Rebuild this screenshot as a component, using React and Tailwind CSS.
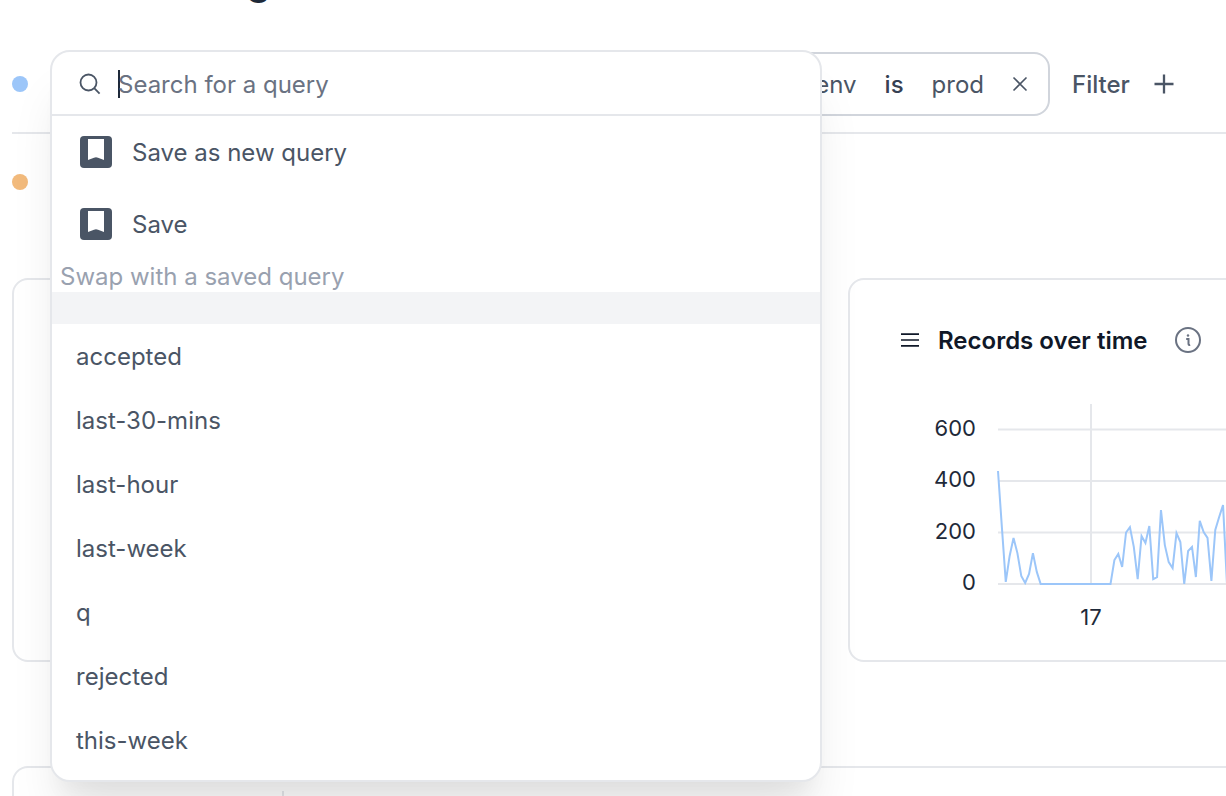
import React, { useState } from "react";

const savedQueries = ["accepted", "last-30-mins", "last-hour", "last-week", "q", "rejected", "this-week"];

const records = [
    439, 221, 8, 109, 179, 120, 31, 4, 39, 120, 47,
    0, 0, 0, 0, 0, 0, 0, 0, 0, 0, 0, 0, 0, 0, 0, 0, 0, 0, 0,
    93, 117, 66, 200, 221, 144, 19, 186, 159, 225, 19, 27, 287, 151, 85, 62, 198, 163, 0, 128,
    144, 27, 245, 202, 179, 12, 210, 260, 307, 4,
];

const toY = (value) => 192 - value * 0.2575;

function SearchIcon() {
    return (
        <svg className="size-6 shrink-0" viewBox="0 0 24 24" fill="none" stroke="currentColor" strokeWidth="1.8">
            <circle cx="10.5" cy="10.5" r="8" />
            <path d="M16.2 16.2L21.6 21.6" />
        </svg>
    );
}

function BookmarkIcon() {
    return (
        <svg className="size-8 shrink-0" viewBox="0 0 32 32">
            <rect width="32" height="32" rx="4" fill="currentColor" />
            <path d="M8 3h16v21l-6-2.3q-2-.9-4 0L8 24z" fill="#fff" />
        </svg>
    );
}

function QueryMenu() {
    const [search, setSearch] = useState("");
    const visible = savedQueries.filter((name) => name.includes(search));

    return (
        <div className="absolute -top-0.5 left-0 z-10 w-[772px] rounded-[20px] border-2 border-gray-200 bg-white pb-2 text-gray-600 shadow-[0_40px_50px_-10px_rgba(0,0,0,0.1),0_20px_20px_-10px_rgba(0,0,0,0.04)]">
            <div className="flex h-16 items-center gap-4 border-b-2 border-gray-200 px-[26px] pt-0.5">
                <SearchIcon />
                <span className="-mr-4 h-7 w-0.5 bg-gray-800" />
                <input
                    type="text"
                    aria-label="Search for a query"
                    placeholder="Search for a query"
                    value={search}
                    onChange={(e) => setSearch(e.target.value)}
                    className="-ml-0.5 min-w-0 flex-1 bg-transparent pt-0.5 outline-none placeholder:text-gray-500"
                />
            </div>
            <button type="button" className="flex h-[72px] w-full items-center gap-5 px-7">
                <BookmarkIcon />
                <span className="pt-0.5">Save as new query</span>
            </button>
            <button type="button" className="flex h-[72px] w-full items-center gap-5 px-7">
                <BookmarkIcon />
                <span className="pt-0.5">Save</span>
            </button>
            <p className="h-8 px-2 leading-[34px] text-gray-400">Swap with a saved query</p>
            <div className="h-8 bg-gray-100" />
            <ul>
                {visible.map((name) => (
                    <li key={name}>
                        <button type="button" className="flex h-16 w-full items-center px-6 pt-0.5">
                            {name}
                        </button>
                    </li>
                ))}
            </ul>
        </div>
    );
}

function FilterBar() {
    return (
        <div className="ml-3 flex items-center border-b-2 border-gray-200 py-4 text-gray-600">
            <span className="size-4 shrink-0 rounded-full bg-[#9cc6f9]" />
            <div className="relative ml-[22px] h-16 w-[732px] shrink-0">
                <QueryMenu />
            </div>
            <div className="flex h-16 w-[268px] shrink-0 items-center justify-end gap-7 rounded-2xl border-2 border-gray-300 pr-5">
                <span className="pt-0.5">env</span>
                <span className="pt-0.5 font-medium text-gray-700">is</span>
                <span className="pt-0.5">prod</span>
                <button type="button" aria-label="Remove filter">
                    <svg className="size-4" viewBox="0 0 16 16" fill="none" stroke="currentColor" strokeWidth="1.6">
                        <path d="M1.5 1.5l13 13M14.5 1.5l-13 13" />
                    </svg>
                </button>
            </div>
            <button type="button" className="ml-[22px] flex items-center gap-6 font-medium">
                <span className="pt-0.5">Filter</span>
                <svg className="size-5" viewBox="0 0 20 20" fill="none" stroke="currentColor" strokeWidth="2.3">
                    <path d="M10 0.5v19M0.5 10h19" />
                </svg>
            </button>
        </div>
    );
}

function RecordsChart() {
    const points = records.map((value, i) => `${100 + i * 3.88},${toY(value)}`).join(" ");

    return (
        <svg className="mt-10 h-61 w-full overflow-visible fill-gray-800 text-[22px]" role="img" aria-label="Records over time">
            {[0, 200, 400, 600].map((tick) => (
                <g key={tick}>
                    <path d={`M100 ${toY(tick)}H400`} className="stroke-gray-200" strokeWidth="2" />
                    <text x="78" y={toY(tick) + 6} textAnchor="end">
                        {tick}
                    </text>
                </g>
            ))}
            <path d="M193 12V192" className="stroke-gray-200" strokeWidth="2" />
            <text x="193" y="233" textAnchor="middle">
                17
            </text>
            <polyline points={points} fill="none" stroke="#9cc6f9" strokeWidth="2" />
        </svg>
    );
}

function RecordsCard() {
    return (
        <section className="-mr-6 flex-1 rounded-2xl border-2 border-gray-200 px-12 pt-12 pb-6">
            <div className="flex h-6 items-center gap-4 text-gray-900">
                <button type="button" aria-label="Chart menu">
                    <svg className="size-6" viewBox="0 0 24 24" fill="none" stroke="currentColor" strokeWidth="1.7">
                        <path d="M3 6.2h18M3 12h18M3 17.8h18" />
                    </svg>
                </button>
                <h2 className="pt-0.5 font-semibold whitespace-nowrap">Records over time</h2>
                <svg className="ml-3 size-[26px] shrink-0 text-gray-500" viewBox="0 0 26 26" fill="none" stroke="currentColor">
                    <circle cx="13" cy="13" r="12" strokeWidth="2" />
                    <path d="M11.2 12h2.3v4.8c0 1.1.7 1.4 1.7 1.1" strokeWidth="2" />
                    <circle cx="13" cy="8.5" r="1.2" fill="currentColor" stroke="none" />
                </svg>
            </div>
            <RecordsChart />
        </section>
    );
}

export default function App() {
    return (
        <div className="h-screen overflow-hidden bg-white font-['Inter',sans-serif] text-2xl [font-optical-sizing:none]">
            <header className="flex h-9 items-start overflow-hidden pl-[246px]">
                <h1 className="-mt-10 text-[40px] leading-10 font-semibold text-gray-800">g</h1>
            </header>
            <FilterBar />
            <div className="ml-3 flex h-24 items-center">
                <span className="size-4 rounded-full bg-[#f2ba7c]" />
            </div>
            <main className="ml-3 pt-12">
                <div className="flex gap-8">
                    <section className="w-[804px] shrink-0 rounded-2xl border-2 border-gray-200" />
                    <RecordsCard />
                </div>
                <section className="mt-[104px] -mr-6 rounded-t-2xl border-2 border-b-0 border-gray-200 pt-[23px]">
                    <div className="h-40 w-[270px] border-r-2 border-gray-200" />
                </section>
            </main>
        </div>
    );
}
